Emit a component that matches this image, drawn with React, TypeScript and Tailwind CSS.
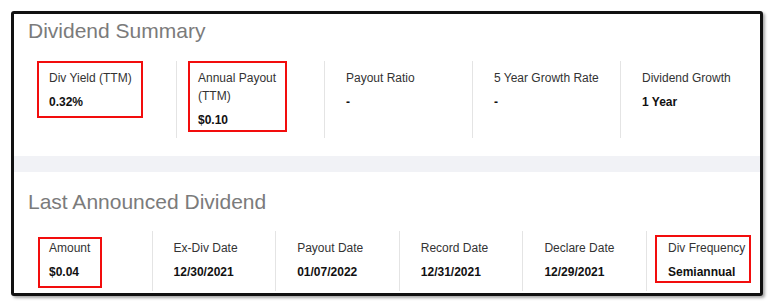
import React from 'react';

type Stat = { label: string; value: string; mark?: string };

const summary: Stat[] = [
  { label: 'Div Yield (TTM)', value: '0.32%', mark: 'left-[9px] top-0 w-[106px] h-[57px]' },
  { label: 'Annual Payout (TTM)', value: '$0.10', mark: 'left-[11px] top-0 w-[99px] h-[71px]' },
  { label: 'Payout Ratio', value: '-' },
  { label: '5 Year Growth Rate', value: '-' },
  { label: 'Dividend Growth', value: '1 Year' },
];

const announced: Stat[] = [
  { label: 'Amount', value: '$0.04', mark: 'left-[10px] top-[6px] w-[64px] h-[51px]' },
  { label: 'Ex-Div Date', value: '12/30/2021' },
  { label: 'Payout Date', value: '01/07/2022' },
  { label: 'Record Date', value: '12/31/2021' },
  { label: 'Declare Date', value: '12/29/2021' },
  { label: 'Div Frequency', value: 'Semiannual', mark: 'left-[8px] top-[4px] w-[96px] h-[48px]' },
];

const StatCell = ({ stat, first, width, labelWidth }: { stat: Stat; first: boolean; width: string; labelWidth: string }) => (
  <div className={`relative shrink-0 h-full pl-[21px] pt-[7.5px] ${width} ${first ? '' : 'border-l border-[#e4e4e4]'}`}>
    <div className={`text-[12px] leading-[18px] text-[#333] ${labelWidth}`}>{stat.label}</div>
    <div className="mt-[6.5px] text-[12px] leading-[18px] font-bold text-[#111]">{stat.value}</div>
    {stat.mark && <div className={`absolute border-2 border-[#f20d0d] ${stat.mark}`} />}
  </div>
);

const App = () => {
  return (
    <div className="w-[773px] h-[308px] bg-white pt-[11px] pl-[11px] font-['Liberation_Sans',Arial,sans-serif]">
      <div className="w-[752px] h-[285px] overflow-hidden rounded-[3px] border-[3px] border-[#111] bg-white shadow-[2px_2px_3px_rgba(0,0,0,0.35)]">
        <section className="pl-[14px] pt-[5px] h-[142px]">
          <h2 className="text-[21px] leading-[24px] text-[#7b7b7b]">Dividend Summary</h2>
          <div className="flex mt-[18px] h-[77px]">
            {summary.map((s, i) => (
              <StatCell key={s.label} stat={s} first={i === 0} width="w-[148px]" labelWidth="max-w-[110px]" />
            ))}
          </div>
        </section>
        <div className="h-[16px] bg-[#f1f2f6]" />
        <section className="pl-[14px] pt-[18px]">
          <h2 className="text-[21px] leading-[24px] text-[#7b7b7b]">Last Announced Dividend</h2>
          <div className="flex mt-[17px] h-[60px]">
            {announced.map((s, i) => (
              <StatCell key={s.label} stat={s} first={i === 0} width="w-[123.6px]" labelWidth="whitespace-nowrap" />
            ))}
          </div>
        </section>
      </div>
    </div>
  );
};

export default App;
